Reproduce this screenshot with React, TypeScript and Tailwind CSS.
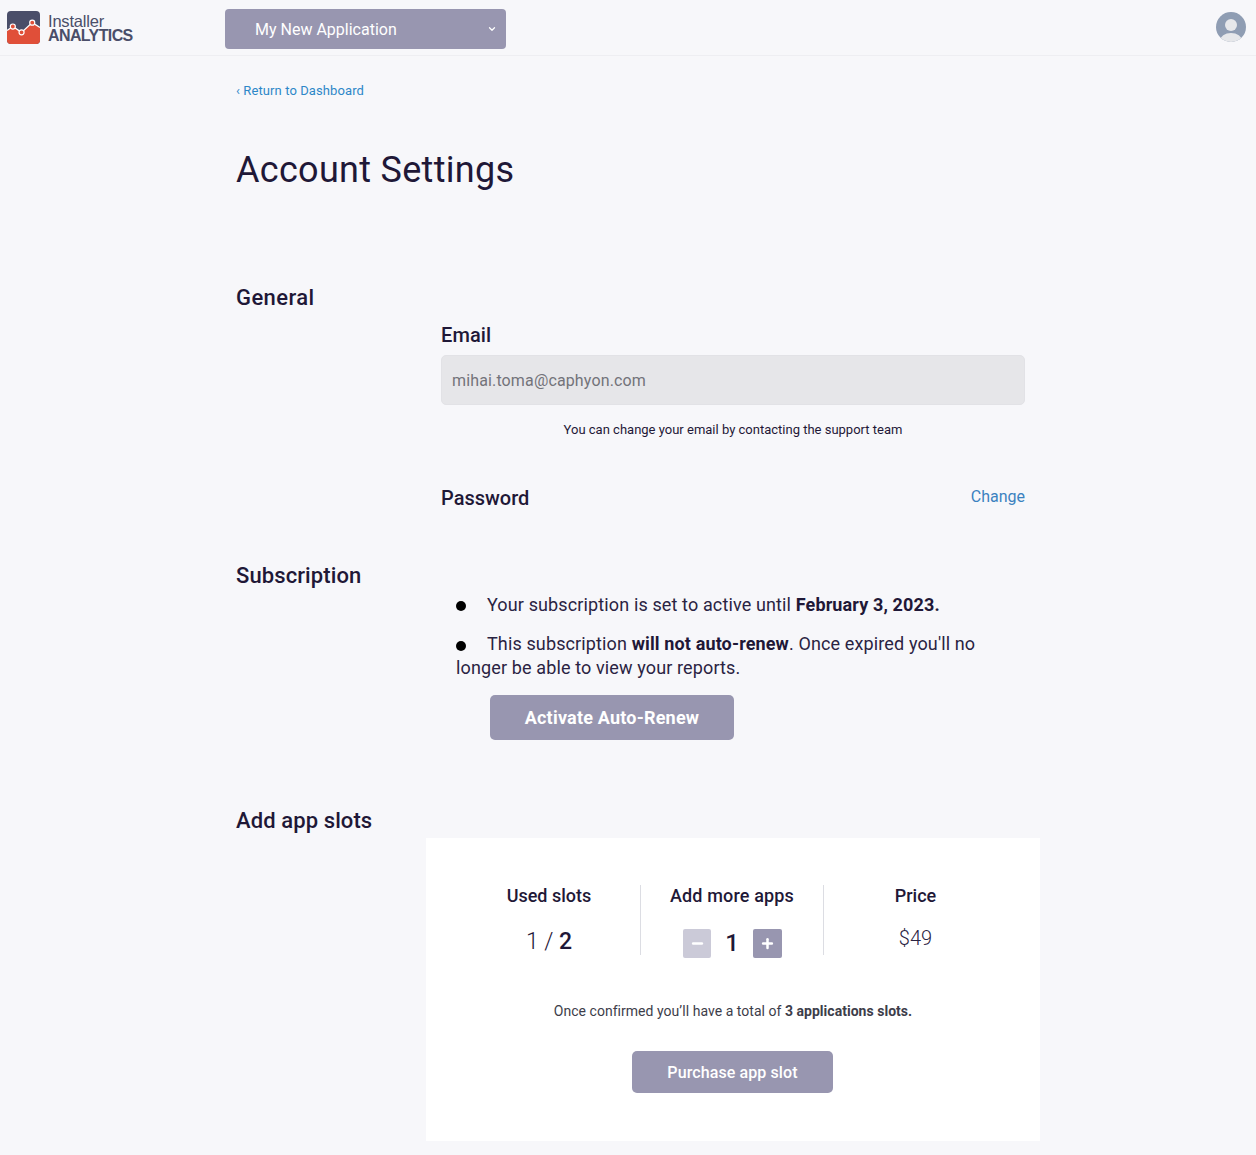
import { ChevronDown, Minus, Plus } from "lucide-react";

function Logo() {
  return (
    <svg width="33" height="33" viewBox="0 0 34 34" className="shrink-0">
      <rect x="0" y="0" width="34" height="34" rx="4" fill="#4a4e69" />
      <path d="M0 20 L6 16 L15 22 L26 12 L34 17 V30 a4 4 0 0 1 -4 4 H4 a4 4 0 0 1 -4 -4 Z" fill="#e04f39" />
      <path d="M0 20 L6 16 L15 22 L26 12 L34 17" fill="none" stroke="#fff" strokeWidth="1.3" />
      <circle cx="6" cy="16" r="2.6" fill="#e04f39" stroke="#fff" strokeWidth="1.2" />
      <circle cx="15" cy="22" r="2.6" fill="#e04f39" stroke="#fff" strokeWidth="1.2" />
      <circle cx="26" cy="12" r="2.6" fill="#e04f39" stroke="#fff" strokeWidth="1.2" />
    </svg>
  );
}

function Avatar() {
  return (
    <svg width="30" height="30" viewBox="0 0 30 30">
      <defs>
        <clipPath id="avatar-clip">
          <circle cx="15" cy="15" r="15" />
        </clipPath>
      </defs>
      <circle cx="15" cy="15" r="15" fill="#8f9db3" />
      <g clipPath="url(#avatar-clip)">
        <circle cx="15" cy="13" r="6" fill="#e6e7ea" />
        <ellipse cx="15" cy="29" rx="11" ry="8" fill="#e6e7ea" />
      </g>
    </svg>
  );
}

function App() {
  return (
    <div className="min-h-[1155px] bg-[#f7f7fa] text-[#1f1837] font-['Roboto',sans-serif] overflow-hidden">
      <header className="h-[56px] border-b border-[#eeeef2] flex items-start relative">
        <div className="w-[225px] pl-[7px] pt-[11px] flex items-start gap-[8px]">
          <Logo />
          <div className="text-[#4a4e69] font-['Liberation_Sans',sans-serif] mt-[3px]">
            <div className="h-[14px] leading-[14px] text-[16.5px] tracking-[-0.2px]">Installer</div>
            <div className="h-[14px] leading-[14px] mt-[1px] text-[16px] font-bold tracking-[-0.6px]">ANALYTICS</div>
          </div>
        </div>
        <div className="mt-[9px] w-[281px] h-[40px] bg-[#9896b0] rounded-[4px] flex items-center justify-between pl-[30px] pr-[9px] text-white text-[16px]">
          <span className="translate-y-[1px]">My New Application</span>
          <ChevronDown size={10} strokeWidth={3} />
        </div>
        <div className="absolute right-[10px] top-[12px]">
          <Avatar />
        </div>
      </header>

      <main className="pl-[236px] relative">
        <a className="block mt-[27px] h-[16px] leading-[16px] text-[13px] tracking-[0.1px] text-[#2d87c8]">‹ Return to Dashboard</a>
        <h1 className="mt-[48px] h-[46px] leading-[46px] text-[36px] tracking-[0.3px] font-normal">Account Settings</h1>

        <h2 className="mt-[91px] h-[28px] leading-[28px] text-[22px] tracking-[0.4px] font-medium">General</h2>

        <section className="ml-[205px] w-[584px]">
          <div className="mt-[11px] h-[24px] leading-[24px] text-[20px] tracking-[0.1px] font-medium">Email</div>
          <div className="mt-[8px] h-[50px] bg-[#e6e6e9] rounded-[5px] border border-[#e2e2e6] flex items-center pl-[10px] text-[16px] tracking-[0.14px] text-[#73737a]">
            <span className="translate-y-[1px]">mihai.toma@caphyon.com</span>
          </div>
          <p className="mt-[17px] h-[16px] leading-[16px] text-center text-[13px]">
            You can change your email by contacting the support team
          </p>
          <div className="mt-[47px] flex justify-between items-start">
            <span className="h-[26px] leading-[26px] text-[20px] font-medium">Password</span>
            <a className="h-[24px] leading-[24px] text-[16px] text-[#3b82c0]">Change</a>
          </div>
        </section>

        <h2 className="mt-[51px] h-[28px] leading-[28px] text-[22px] tracking-[0.1px] font-medium">Subscription</h2>

        <section className="ml-[220px] w-[540px] text-[18px] tracking-[0.13px] text-[#2a2342]">
          <p className="mt-[3px] leading-[24px]">
            <span className="inline-block w-[10px] h-[10px] rounded-full bg-black mr-[21px]" />
            Your subscription is set to active until <b className="font-bold text-[#1f1837]">February 3, 2023.</b>
          </p>
          <p className="mt-[15px] leading-[24px]">
            <span className="inline-block w-[10px] h-[10px] rounded-full bg-black mr-[21px] translate-y-[1px]" />
            This subscription <b className="font-bold text-[#1f1837]">will not auto-renew</b>. Once expired you'll no longer be able to view your reports.
          </p>
          <button className="block mt-[15px] ml-[34px] w-[244px] h-[45px] bg-[#9896b0] rounded-[5px] text-white text-[18px] tracking-[0.2px] font-bold">
            Activate Auto-Renew
          </button>
        </section>

        <h2 className="mt-[67px] h-[28px] leading-[28px] text-[22px] tracking-[0.1px] font-medium">Add app slots</h2>

        <section className="ml-[190px] mt-[3px] w-[614px] h-[303px] bg-white">
          <div className="pt-[47px] pl-[32px] flex items-start">
            <div className="w-[183px] h-[70px] border-r border-[#dcdde3] text-center">
              <div className="h-[24px] leading-[22px] text-[18px] font-medium">Used slots</div>
              <div className="mt-[19px] h-[28px] leading-[28px] text-[23px] font-[350]">
                1 / <b className="font-medium">2</b>
              </div>
            </div>
            <div className="w-[183px] h-[70px] border-r border-[#dcdde3] text-center">
              <div className="h-[24px] leading-[22px] text-[18px] tracking-[0.15px] font-medium">Add more apps</div>
              <div className="mt-[20px] flex items-center justify-center gap-[14px] pl-[1px]">
                <span className="w-[28px] h-[29px] rounded-[2px] bg-[#cbcad8] flex items-center justify-center text-white">
                  <Minus size={15} strokeWidth={4} />
                </span>
                <span className="text-[24px] font-medium leading-[29px]">1</span>
                <span className="w-[29px] h-[29px] rounded-[2px] bg-[#9896b0] flex items-center justify-center text-white">
                  <Plus size={15} strokeWidth={4} />
                </span>
              </div>
            </div>
            <div className="w-[183px] text-center">
              <div className="h-[24px] leading-[22px] text-[18px] font-medium">Price</div>
              <div className="mt-[17px] h-[24px] leading-[24px] text-[20px] font-[350] text-[#2a2342]">$49</div>
            </div>
          </div>
          <p className="mt-[47px] h-[18px] leading-[18px] text-center text-[14px] tracking-[0.03px] text-[#3d3d4a]">
            Once confirmed you’ll have a total of <b className="font-bold">3 applications slots.</b>
          </p>
          <button className="block ml-[206px] mt-[31px] pt-[1px] w-[201px] h-[42px] bg-[#9896b0] rounded-[5px] text-white text-[16px] tracking-[0.1px] font-medium">
            Purchase app slot
          </button>
        </section>
      </main>
    </div>
  );
}

export default App;
